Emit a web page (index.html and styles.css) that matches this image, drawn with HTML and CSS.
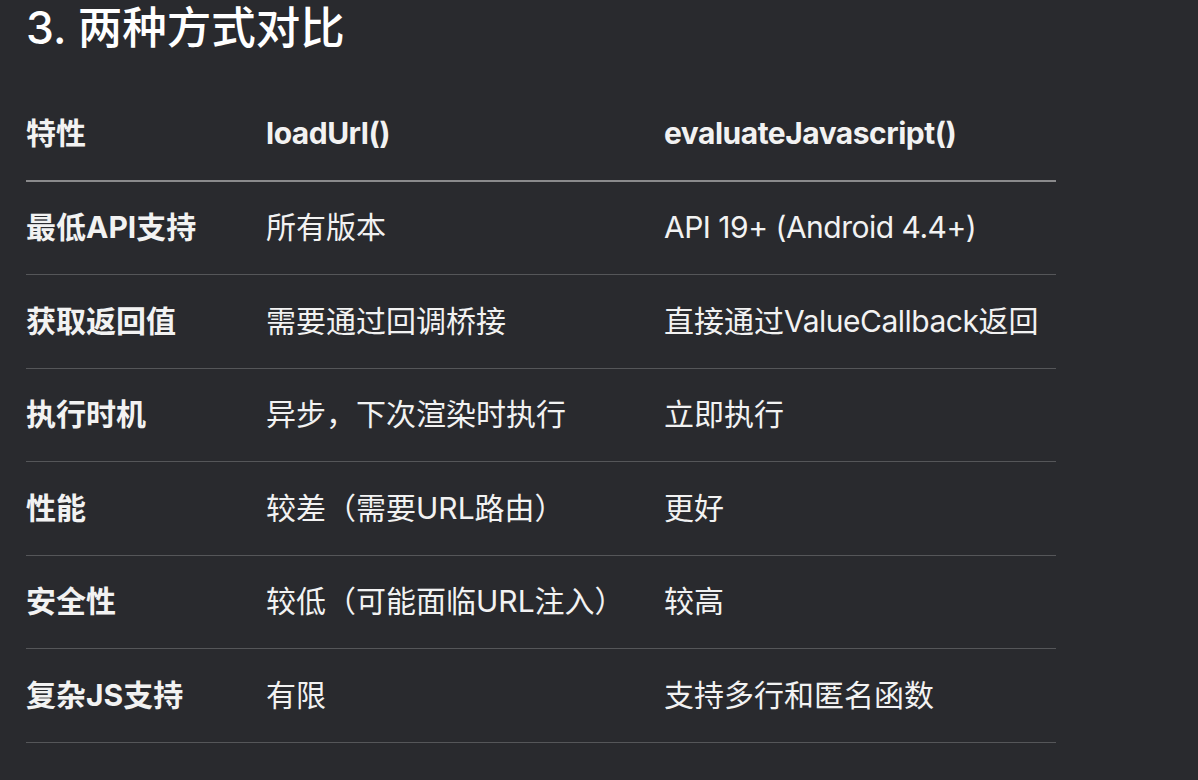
FILE: index.html
```html
<!DOCTYPE html>
<html lang="zh-CN">
<head>
<meta charset="utf-8">
<title>两种方式对比</title>
<link rel="stylesheet" href="styles.css">
</head>
<body>
<main class="page">
  <h2 class="title">3. 两种方式对比</h2>
  <table class="compare">
    <thead>
      <tr>
        <th class="c1">特性</th>
        <th class="c2"><span class="lt">loadUrl()</span></th>
        <th class="c3"><span class="lt">evaluateJavascript()</span></th>
      </tr>
    </thead>
    <tbody>
      <tr><td class="key">最低API支持</td><td>所有版本</td><td><span class="lt">API 19+ (Android 4.4+)</span></td></tr>
      <tr><td class="key">获取返回值</td><td>需要通过回调桥接</td><td>直接通过<span class="lt">ValueCallback</span>返回</td></tr>
      <tr><td class="key">执行时机</td><td>异步，下次渲染时执行</td><td>立即执行</td></tr>
      <tr><td class="key">性能</td><td>较差（需要URL路由）</td><td>更好</td></tr>
      <tr><td class="key">安全性</td><td>较低（可能面临URL注入）</td><td>较高</td></tr>
      <tr><td class="key">复杂JS支持</td><td>有限</td><td>支持多行和匿名函数</td></tr>
    </tbody>
  </table>
</main>
</body>
</html>
```
FILE: styles.css
```css
html, body {
  margin: 0;
  padding: 0;
  background: #292a2e;
  height: 100%;
}
body {
  font-family: Inter, "Noto Sans CJK SC", sans-serif;
  color: #f2f2f2;
  overflow: hidden;
}
.page {
  padding: 0 26px;
}
.title {
  margin: 0;
  font-size: 44.5px;
  line-height: 56px;
  font-weight: 500;
  color: #ffffff;
}
.compare {
  margin-top: 31px;
  width: 1030px;
  border-collapse: collapse;
  font-size: 30px;
  line-height: 45px;
}
.compare th,
.compare td {
  text-align: left;
  padding: 23.75px 0;
  vertical-align: middle;
  white-space: nowrap;
}
.compare th {
  font-weight: 700;
  border-bottom: 2px solid #8a8a8c;
}
.compare td {
  font-weight: 400;
  border-bottom: 1px solid #555659;
}
.compare td.key {
  font-weight: 700;
}
.lt {
  letter-spacing: -0.5px;
}
.c1 { width: 240px; }
.c2 { width: 398px; }
.c3 { width: 392px; }
```
